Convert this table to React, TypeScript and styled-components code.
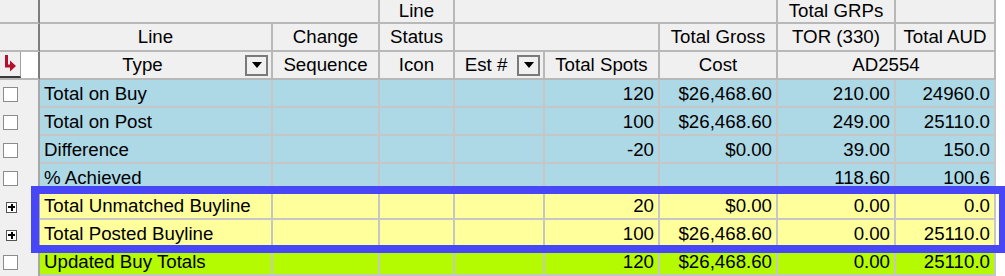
import React from "react";
import styled, { createGlobalStyle } from "styled-components";

const GlobalStyle = createGlobalStyle`
  body {
    margin: 0;
    background: #ffffff;
    font-family: "Liberation Sans", Arial, sans-serif;
  }
`;

const COLS = "40px 233px 107px 75px 90px 115px 118px 118px 100px";

const Wrapper = styled.div`
  position: relative;
  width: 1005px;
  height: 276px;
  overflow: hidden;
  font-size: 18.7px;
  color: #000;
`;

const Row = styled.div<{ $h: number }>`
  display: grid;
  grid-template-columns: ${COLS};
  height: ${(p) => p.$h}px;
`;

const HeadCell = styled.div<{ $span?: number }>`
  grid-column: span ${(p) => p.$span || 1};
  box-sizing: border-box;
  display: flex;
  align-items: center;
  justify-content: center;
  background: #f0f0f0;
  border-right: 2px solid #b8b8b8;
  border-bottom: 2px solid #b8b8b8;
  white-space: nowrap;
`;

const CornerCell = styled.div`
  box-sizing: border-box;
  background: #f0f0f0;
  border-right: 2px solid #7c7c7c;
  border-bottom: 2px solid #b8b8b8;
`;

const SelectorCell = styled.div`
  box-sizing: border-box;
  display: flex;
  background: #ffffff;
  border-right: 2px solid #7c7c7c;
  border-bottom: 2px solid #b8b8b8;
`;

const ArrowBox = styled.div`
  width: 21px;
  box-sizing: border-box;
  background: #f0f0f0;
  border-right: 1px solid #a0a0a0;
  border-bottom: 2px solid #3a3a3a;
  display: flex;
  align-items: center;
  justify-content: center;
`;

const FilterHead = styled(HeadCell)`
  justify-content: space-between;
`;

const FilterLabel = styled.span`
  flex: 1;
  text-align: center;
`;

const DropButton = styled.div`
  width: 23px;
  height: 21px;
  margin-right: 3px;
  box-sizing: border-box;
  border: 2px solid #7a7a7a;
  background: #f0f0f0;
  display: flex;
  align-items: center;
  justify-content: center;

  &::after {
    content: "";
    border-left: 5px solid transparent;
    border-right: 5px solid transparent;
    border-top: 6px solid #000;
  }
`;

const SideCell = styled.div`
  box-sizing: border-box;
  background: #f0f0f0;
  border-right: 2px solid #a8a8a8;
  display: flex;
  align-items: center;
`;

const CheckBox = styled.div`
  width: 15px;
  height: 15px;
  margin-left: 3px;
  margin-top: 1px;
  box-sizing: border-box;
  border: 1px solid #8c8c8c;
  background: #ffffff;
`;

const Expander = styled.div`
  width: 11px;
  height: 11px;
  margin-left: 6px;
  margin-top: 2px;
  box-sizing: border-box;
  border: 1px solid #555555;
  background: #ffffff;
  position: relative;

  &::before,
  &::after {
    content: "";
    position: absolute;
    background: #000;
  }
  &::before {
    left: 1px;
    top: 3.5px;
    width: 7px;
    height: 2px;
  }
  &::after {
    left: 3.5px;
    top: 1px;
    width: 2px;
    height: 7px;
  }
`;

const DataCell = styled.div<{ $bg: string; $right?: boolean }>`
  box-sizing: border-box;
  display: flex;
  align-items: center;
  justify-content: ${(p) => (p.$right ? "flex-end" : "flex-start")};
  padding: 2px 4px 0 4px;
  background: ${(p) => p.$bg};
  border-right: 2px solid #c6c6c6;
  border-bottom: 2px solid #c6c6c6;
  white-space: nowrap;
`;

const Highlight = styled.div`
  position: absolute;
  left: 31px;
  top: 186px;
  width: 976px;
  height: 67px;
  box-sizing: border-box;
  border: 8px solid #4747f7;
  pointer-events: none;
`;

const BLUE = "#add8e6";
const YELLOW = "#ffff9c";
const GREEN = "#b4fa00";

type Line = {
  label: string;
  bg: string;
  expand?: boolean;
  values: string[];
};

const lines: Line[] = [
  { label: "Total on Buy", bg: BLUE, values: ["120", "$26,468.60", "210.00", "24960.0"] },
  { label: "Total on Post", bg: BLUE, values: ["100", "$26,468.60", "249.00", "25110.0"] },
  { label: "Difference", bg: BLUE, values: ["-20", "$0.00", "39.00", "150.0"] },
  { label: "% Achieved", bg: BLUE, values: ["", "", "118.60", "100.6"] },
  { label: "Total Unmatched Buyline", bg: YELLOW, expand: true, values: ["20", "$0.00", "0.00", "0.0"] },
  { label: "Total Posted Buyline", bg: YELLOW, expand: true, values: ["100", "$26,468.60", "0.00", "25110.0"] },
  { label: "Updated Buy Totals", bg: GREEN, values: ["120", "$26,468.60", "0.00", "25110.0"] },
];

const JumpArrow = () => (
  <svg width="14" height="20" viewBox="0 0 14 20">
    <path d="M3.5 1 V12 H8" stroke="#b3122c" strokeWidth="3" fill="none" />
    <path d="M7 6.5 L13 12 L7 17.5 Z" fill="#b3122c" />
  </svg>
);

export default function App() {
  return (
    <Wrapper>
      <GlobalStyle />
      <Row $h={24}>
        <CornerCell />
        <HeadCell $span={2} />
        <HeadCell>Line</HeadCell>
        <HeadCell $span={3} />
        <HeadCell>Total GRPs</HeadCell>
        <HeadCell />
      </Row>
      <Row $h={28}>
        <CornerCell />
        <HeadCell>Line</HeadCell>
        <HeadCell>Change</HeadCell>
        <HeadCell>Status</HeadCell>
        <HeadCell $span={2} />
        <HeadCell>Total Gross</HeadCell>
        <HeadCell>TOR (330)</HeadCell>
        <HeadCell>Total AUD</HeadCell>
      </Row>
      <Row $h={28}>
        <SelectorCell>
          <ArrowBox>
            <JumpArrow />
          </ArrowBox>
        </SelectorCell>
        <FilterHead>
          <FilterLabel>Type</FilterLabel>
          <DropButton />
        </FilterHead>
        <HeadCell>Sequence</HeadCell>
        <HeadCell>Icon</HeadCell>
        <FilterHead>
          <FilterLabel>Est #</FilterLabel>
          <DropButton />
        </FilterHead>
        <HeadCell>Total Spots</HeadCell>
        <HeadCell>Cost</HeadCell>
        <HeadCell $span={2}>AD2554</HeadCell>
      </Row>
      {lines.map((line) => (
        <Row $h={28} key={line.label}>
          <SideCell>{line.expand ? <Expander /> : <CheckBox />}</SideCell>
          <DataCell $bg={line.bg}>{line.label}</DataCell>
          <DataCell $bg={line.bg} />
          <DataCell $bg={line.bg} />
          <DataCell $bg={line.bg} />
          {line.values.map((v, i) => (
            <DataCell $bg={line.bg} $right key={i}>
              {v}
            </DataCell>
          ))}
        </Row>
      ))}
      <Highlight />
    </Wrapper>
  );
}
